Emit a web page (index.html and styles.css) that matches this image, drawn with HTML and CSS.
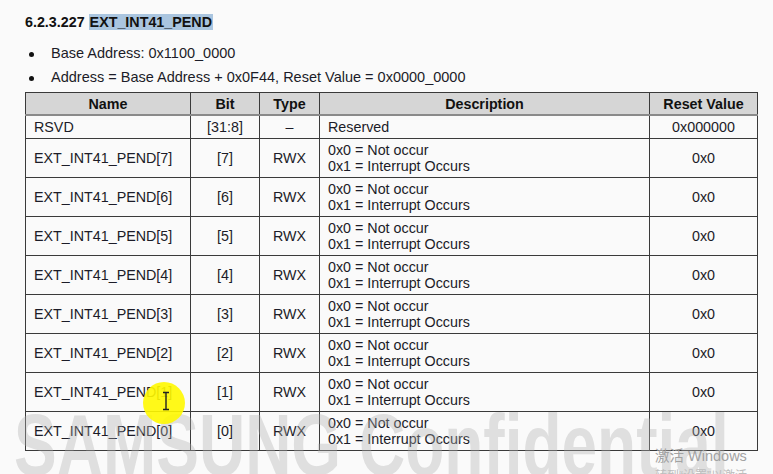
FILE: index.html
```html
<!DOCTYPE html>
<html>
<head>
<meta charset="utf-8">
<link rel="stylesheet" href="styles.css">
</head>
<body>
<div class="page">
  <h1 class="title">6.2.3.227 <span class="sel">EXT_INT41_PEND</span></h1>
  <ul class="bullets">
    <li>Base Address: 0x1100_0000</li>
    <li>Address = Base Address + 0x0F44, Reset Value = 0x0000_0000</li>
  </ul>
  <table class="reg">
    <colgroup>
      <col class="c-name"><col class="c-bit"><col class="c-type"><col class="c-desc"><col class="c-reset">
    </colgroup>
    <thead>
      <tr><th>Name</th><th>Bit</th><th>Type</th><th>Description</th><th>Reset Value</th></tr>
    </thead>
    <tbody>
      <tr class="short"><td>RSVD</td><td class="ctr">[31:8]</td><td class="ctr">–</td><td>Reserved</td><td class="ctr">0x000000</td></tr>
      <tr><td>EXT_INT41_PEND[7]</td><td class="ctr">[7]</td><td class="ctr">RWX</td><td>0x0 = Not occur<br>0x1 = Interrupt Occurs</td><td class="ctr">0x0</td></tr>
      <tr><td>EXT_INT41_PEND[6]</td><td class="ctr">[6]</td><td class="ctr">RWX</td><td>0x0 = Not occur<br>0x1 = Interrupt Occurs</td><td class="ctr">0x0</td></tr>
      <tr><td>EXT_INT41_PEND[5]</td><td class="ctr">[5]</td><td class="ctr">RWX</td><td>0x0 = Not occur<br>0x1 = Interrupt Occurs</td><td class="ctr">0x0</td></tr>
      <tr><td>EXT_INT41_PEND[4]</td><td class="ctr">[4]</td><td class="ctr">RWX</td><td>0x0 = Not occur<br>0x1 = Interrupt Occurs</td><td class="ctr">0x0</td></tr>
      <tr><td>EXT_INT41_PEND[3]</td><td class="ctr">[3]</td><td class="ctr">RWX</td><td>0x0 = Not occur<br>0x1 = Interrupt Occurs</td><td class="ctr">0x0</td></tr>
      <tr><td>EXT_INT41_PEND[2]</td><td class="ctr">[2]</td><td class="ctr">RWX</td><td>0x0 = Not occur<br>0x1 = Interrupt Occurs</td><td class="ctr">0x0</td></tr>
      <tr><td>EXT_INT41_PEND[1]</td><td class="ctr">[1]</td><td class="ctr">RWX</td><td>0x0 = Not occur<br>0x1 = Interrupt Occurs</td><td class="ctr">0x0</td></tr>
      <tr><td>EXT_INT41_PEND[0]</td><td class="ctr">[0]</td><td class="ctr">RWX</td><td>0x0 = Not occur<br>0x1 = Interrupt Occurs</td><td class="ctr">0x0</td></tr>
    </tbody>
  </table>
</div>
<div class="watermark">SAMSUNG Confidential</div>
<div class="activate">
  <div class="act1">激活 Windows</div>
  <div class="act2">转到“设置”以激活 Windows。</div>
</div>
<div class="cursor-hl"></div>
<svg class="ibeam" width="10" height="20" viewBox="0 0 10 20">
  <path d="M2 1.5h6M5 1.5v17M2 18.5h6" stroke="#222" stroke-width="1.4" fill="none"/>
</svg>
</body>
</html>
```

FILE: styles.css
```css
html, body {
  margin: 0;
  padding: 0;
  background: #fafafa;
  width: 773px;
  height: 474px;
  overflow: hidden;
  font-family: "Liberation Sans", Arial, sans-serif;
  color: #1c1c28;
}

.page {
  padding: 14px 0 0 25px;
}

.title {
  margin: 0;
  font-size: 14.3px;
  font-weight: bold;
  line-height: 17px;
  color: #111;
}

.sel {
  background: #aac5df;
  padding: 0 1px;
}

.bullets {
  margin: 10px 0 0 0;
  padding: 0 0 0 26px;
  font-size: 14.5px;
  line-height: 24px;
  list-style: none;
}

.bullets li {
  position: relative;
}

.bullets li::before {
  content: "";
  position: absolute;
  left: -22px;
  top: 11px;
  width: 5px;
  height: 5px;
  border-radius: 50%;
  background: #111;
}

.reg {
  margin-top: 3px;
  border-collapse: collapse;
  table-layout: fixed;
  width: 732px;
  font-size: 14.3px;
  line-height: 16px;
}

.c-name { width: 165px; }
.c-bit { width: 69px; }
.c-type { width: 60px; }
.c-desc { width: 330px; }
.c-reset { width: 108px; }

.reg th, .reg td {
  border: 1px solid #3a3a3a;
  padding: 0 8px;
  vertical-align: middle;
}

.reg th {
  background: #d6d6d6;
  font-weight: bold;
  text-align: center;
  height: 21px;
  color: #111;
  border-bottom: 2px solid #8a8a8a;
}

.reg td {
  height: 38px;
}

.reg tr.short td {
  height: 22px;
}

.reg td.ctr {
  text-align: center;
}

.reg tbody tr + tr td {
  border-top: 1px solid #4a4a4a;
}

.watermark {
  position: absolute;
  left: 14px;
  top: 402px;
  font-family: "Liberation Sans", Arial, sans-serif;
  font-weight: bold;
  font-size: 64px;
  color: rgba(175, 175, 175, 0.36);
  white-space: nowrap;
  transform: scaleY(1.35);
  transform-origin: left top;
  line-height: 1;
}

.activate {
  position: absolute;
  left: 655px;
  top: 447px;
  color: #a2a2a2;
  font-family: "Liberation Sans", "Noto Sans CJK SC", sans-serif;
}

.act1 {
  font-size: 14.5px;
  line-height: 18px;
}

.act2 {
  font-size: 12px;
  line-height: 14px;
  margin-top: 4px;
  color: #bdbdbd;
}

.cursor-hl {
  position: absolute;
  left: 143px;
  top: 382px;
  width: 42px;
  height: 42px;
  border-radius: 50%;
  background: rgba(255, 248, 0, 0.9);
}

.ibeam {
  position: absolute;
  left: 161px;
  top: 391px;
}
```
